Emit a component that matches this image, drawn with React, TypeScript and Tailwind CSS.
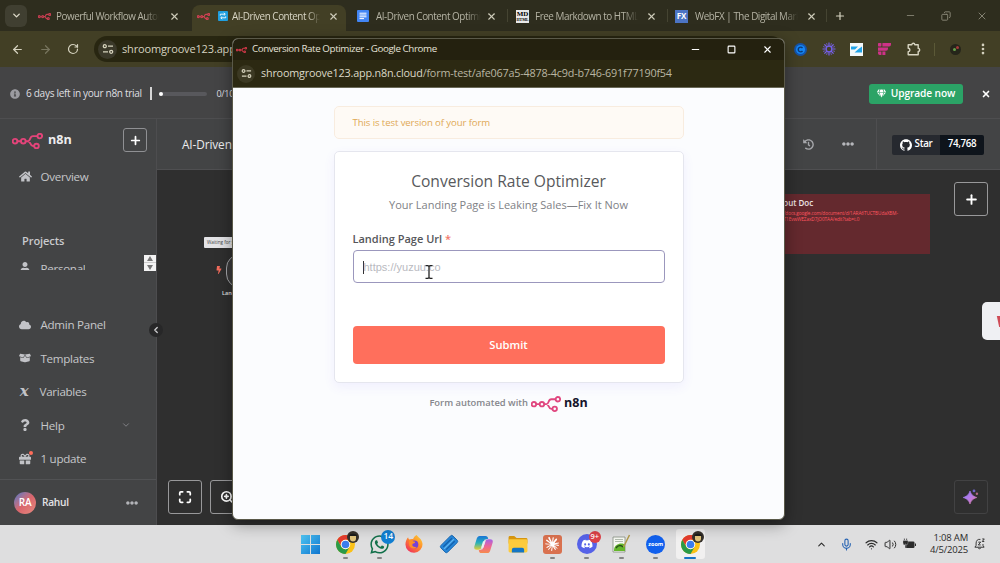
import type { ReactNode } from 'react';
import { FaBolt, FaBoxOpen, FaCloud, FaEllipsisH, FaGem, FaGift, FaHistory, FaHome, FaInfoCircle, FaQuestion, FaUser, FaWhatsapp, FaDiscord } from 'react-icons/fa';
import { SiGithub, SiClaude } from 'react-icons/si';
import { ArrowLeft, ArrowRight, ChevronDown, ChevronLeft, ChevronUp, EllipsisVertical, Maximize, Mic, Minus, Plus, RotateCw, Square, Volume2, Wifi, X, ZoomIn, Copy } from 'lucide-react';

function N8nMark({ className, color = '#d9416d', stroke = 1.9 }: { className: string; color?: string; stroke?: number }) {
  return (
    <svg viewBox="0 0 31 16" className={className} fill="none" stroke={color} strokeWidth={stroke}>
      <circle cx="3" cy="8.2" r="2.3" />
      <circle cx="11.3" cy="8.2" r="2.3" />
      <circle cx="27.8" cy="3.1" r="2.3" />
      <circle cx="24.5" cy="13" r="2.3" />
      <path d="M5.3 8.2H9M13.6 8.2H16C18.8 8.2 17.3 3.1 21 3.1h4.5M16 8.2c2.8 0 1.8 4.8 5 4.8h1.2" />
    </svg>
  );
}

function Tune({ className }: { className: string }) {
  return (
    <svg viewBox="0 0 12 12" className={className} fill="none" stroke="#d6d3bd" strokeWidth="1.3">
      <circle cx="2.8" cy="3.2" r="1.5" />
      <circle cx="9.2" cy="8.8" r="1.5" />
      <path d="M6 3.2h5M1 8.8h5" />
    </svg>
  );
}

function Tab({ width, active, icon, title, textWidth }: { width: string; active?: boolean; icon: ReactNode; title: string; textWidth: string }) {
  return (
    <div className={`${width} flex h-[26px] shrink-0 items-center self-end pb-[4px] ${active ? 'rounded-t-lg bg-[#423f25]' : ''}`}>
      {icon}
      <span className={`${textWidth} shrink-0 overflow-hidden whitespace-nowrap text-[9.9px] tracking-[-0.46px] [mask-image:linear-gradient(to_right,black_86%,transparent)] ${active ? 'text-[#d8d5c4]' : 'text-[#b5b3a4]'}`}>
        {title}
      </span>
      <X className="ml-auto mr-[7px] size-[11px] text-[#cfccba]" strokeWidth={2.4} />
    </div>
  );
}

function TabStrip() {
  return (
    <div className="flex h-[31px] items-center bg-[#2e2d1e]">
      <div className="ml-[5px] flex size-[22px] items-center justify-center rounded-md bg-[#403f31]">
        <ChevronDown className="size-[11px] text-[#dddac9]" strokeWidth={3} />
      </div>
      <Tab width="w-[154px] ml-[6px] pl-[5px]" textWidth="w-[103px]" title="Powerful Workflow Automation" icon={<N8nMark className="mr-[5px] h-[7px] w-[13px] shrink-0" color="#c53d50" stroke={2.8} />} />
      <Tab
        width="w-[154px] ml-[5px] pl-[5px]"
        textWidth="w-[88px]"
        title="AI-Driven Content Optimizer"
        active
        icon={
          <>
            <N8nMark className="mr-[8px] h-[7px] w-[13px] shrink-0" color="#cf4053" stroke={2.8} />
            <svg viewBox="0 0 10 10" className="mr-[4px] size-[10px] shrink-0">
              <rect width="10" height="10" rx="1" fill="#1f9fe0" />
              <path d="M2.3 4.6V3.2h4.5M5.8 1.8l1.5 1.4-1.5 1.3M7.7 5.4v1.4H3.2M4.2 5.5 2.7 6.8l1.5 1.4" stroke="#fff" strokeWidth=".9" fill="none" />
            </svg>
          </>
        }
      />
      <Tab
        width="w-[158px] pl-[11px]"
        textWidth="w-[105px]"
        title="AI-Driven Content Optimizer"
        icon={
          <svg viewBox="0 0 12 12" className="mr-[7px] size-[12px] shrink-0">
            <rect width="12" height="12" rx="1" fill="#4285f4" />
            <path d="M2.5 3.2h7M2.5 5h7M2.5 6.8h7M2.5 8.6h4.5" stroke="#fff" strokeWidth="1" />
          </svg>
        }
      />
      <div className="ml-[3px] h-[13px] w-px bg-[#454432]" />
      <Tab
        width="w-[156px] pl-[8px]"
        textWidth="w-[103px]"
        title="Free Markdown to HTML Converter"
        icon={
          <span className="mr-[6px] flex size-[13px] shrink-0 flex-col items-center justify-center overflow-hidden bg-[#e9e9e9] font-['Liberation_Serif',serif] font-bold text-black">
            <span className="text-[7px] leading-[7px]">MD</span>
            <span className="text-[4px] leading-[4px]">HTML</span>
          </span>
        }
      />
      <div className="ml-[3px] h-[13px] w-px bg-[#454432]" />
      <Tab
        width="w-[156px] pl-[7px]"
        textWidth="w-[103px]"
        title="WebFX | The Digital Marketing"
        icon={<span className="mr-[7px] flex size-[13px] shrink-0 items-center justify-center bg-[#4c74c4] text-[8px] font-bold text-white">FX</span>}
      />
      <div className="ml-[2px] h-[13px] w-px bg-[#454432]" />
      <Plus className="ml-[7px] size-[12px] text-[#d6d3c0]" strokeWidth={2.4} />
      <div className="ml-auto mr-[12px] flex items-center gap-[25px] text-[#8d8b7b]">
        <Minus className="size-[11px]" strokeWidth={1.8} />
        <Copy className="size-[10px] -scale-x-100" strokeWidth={2.2} />
        <X className="size-[12px]" strokeWidth={1.8} />
      </div>
    </div>
  );
}

function Toolbar() {
  return (
    <div className="flex h-[36px] items-center bg-[#423f25] text-[#d6d3c0]">
      <ArrowLeft className="ml-[11px] size-[13px]" strokeWidth={2.2} />
      <ArrowRight className="ml-[15px] size-[13px] text-[#77755e]" strokeWidth={2.2} />
      <RotateCw className="ml-[15px] size-[12px]" strokeWidth={2.4} />
      <div className="ml-[15px] flex h-[26px] w-[690px] items-center rounded-full bg-[#282611] pl-[4px]">
        <span className="flex size-[19px] items-center justify-center rounded-full bg-[#3b392a]">
          <Tune className="size-[12px]" />
        </span>
        <span className="ml-[5px] text-[11px] tracking-[-0.15px]">shroomgroove123.app.n8n.cloud</span>
      </div>
      <div className="ml-[10px] flex items-center">
        <svg viewBox="0 0 13 13" className="size-[13px]">
          <circle cx="6.5" cy="6.5" r="6.5" fill="#1553a8" />
          <circle cx="6.5" cy="6.5" r="4.6" fill="#1386f4" />
          <path d="M8.5 5a2.4 2.4 0 1 0 0 3" stroke="#0c3976" strokeWidth="1.4" fill="none" />
        </svg>
        <svg viewBox="0 0 14 14" className="ml-[15px] size-[14px]" stroke="#7560ea" strokeWidth="1.2" fill="none">
          <circle cx="7" cy="7" r="2.8" />
          <path d="M7 .5v3.700M7 9.800v3.700M.5 7h3.700M9.800 7h3.700M2.400 2.400l2.600 2.600M9 9l2.600 2.600M11.600 2.400 9 5M5 9l-2.600 2.600" />
          <path d="m4.500 1 .9 2.600M8.600 10.400l.9 2.600M9.500 1l-.9 2.600M5.400 10.400 4.500 13M1 4.500l2.600.9M10.400 8.600l2.600.9M13 4.500l-2.600.9M3.600 8.600 1 9.500" strokeWidth=".7" />
        </svg>
        <svg viewBox="0 0 13 13" className="ml-[14px] size-[13px]">
          <rect width="13" height="13" fill="#f4f8fa" />
          <path d="M1 3.500h7L5 6.500H1zM12 9.500H4.500L8.500 6l3.500-2.500z" fill="#21a4e8" />
        </svg>
        <svg viewBox="0 0 13 13" className="ml-[15px] size-[13px]" fill="#cf3288">
          <rect width="3.4" height="3.4" rx=".6" />
          <path d="M4.4 0H13v1.5a2 2 0 0 1-2 2H4.4zM0 4.4h10v1.4a2 2 0 0 1-2 2H0zM0 8.6h3.4V12H1.8A1.8 1.8 0 0 1 0 10.2zM4.4 8.6h3V12h-3z" />
        </svg>
        <svg viewBox="0 0 14 14" className="ml-[16px] size-[14px]" fill="none" stroke="#d6d3c0" strokeWidth="1.4" strokeLinejoin="round">
          <path d="M1.200 2.800h3.600a1.500 1.500 0 0 1 3 0h3.400v3.600a1.500 1.500 0 0 1 0 3v3.400h-10V9.600a1.700 1.700 0 0 0 0-3.400z" />
        </svg>
        <div className="ml-[13px] h-[13px] w-px bg-[#5b5937]" />
        <span className="ml-[15px] flex size-[11px] items-center justify-center rounded-full bg-[#25251a]">
          <span className="size-[3px] rounded-full bg-[#67a04a]" />
          <span className="mb-[3px] size-[3px] rounded-full bg-[#a33a3a]" />
        </span>
        <EllipsisVertical className="ml-[15px] size-[14px]" strokeWidth={2.6} />
      </div>
    </div>
  );
}

function TrialBanner() {
  return (
    <div className="flex h-[52px] items-center border-b border-[#4e4e50] bg-[#444445] pt-[2px] text-[11px] font-medium text-[#dfdfe0]">
      <FaInfoCircle className="ml-[10px] size-[10px] shrink-0 text-[#9b9ba0]" />
      <span className="ml-[6px] w-[119px] shrink-0 whitespace-nowrap text-[10.1px] tracking-[-0.32px]">6 days left in your n8n trial</span>
      <span className="ml-[5px] h-[13px] w-[1.5px] bg-[#d5d5d5]" />
      <span className="ml-[7px] flex h-[4px] w-[48px] items-center rounded-full bg-[#58585c]">
        <span className="size-[4px] rounded-full bg-white" />
      </span>
      <span className="ml-[10px] text-[9px] tracking-[-0.3px]">0/1000</span>
      <button className="ml-auto flex h-[20px] w-[94px] items-center justify-center gap-[5px] rounded-[3px] bg-[#2ba366] text-[10.2px] font-semibold tracking-[-0.1px] text-white">
        <FaGem className="size-[9px]" />
        Upgrade now
      </button>
      <X className="ml-[18px] mr-[9px] size-[10px] text-white" strokeWidth={4} />
    </div>
  );
}

function MenuItem({ icon, label, children }: { icon: ReactNode; label: string; children?: ReactNode }) {
  return (
    <div className="flex h-[33.5px] items-center pl-[18px] text-[11.6px] tracking-[-0.28px] text-[#c6c7ca]">
      <span className="flex w-[14px] justify-center text-[#c2c3c7]">{icon}</span>
      <span className="ml-[8.5px] whitespace-nowrap">{label}</span>
      {children}
    </div>
  );
}

function Sidebar() {
  return (
    <aside className="relative flex w-[157px] shrink-0 flex-col border-r border-[#4d4d4f] bg-[#434445]">
      <div className="flex h-[41px] items-center pt-[1px]">
        <N8nMark className="ml-[12px] mt-[2px] h-[16px] w-[31px]" color="#e4447a" />
        <span className="ml-[5px] text-[12.6px] font-bold text-[#ececee]">n8n</span>
        <button className="ml-auto mr-[9px] flex size-[24px] items-center justify-center rounded-[3px] border border-[#8f9093] text-white">
          <Plus className="size-[13px]" strokeWidth={3.2} />
        </button>
      </div>
      <MenuItem icon={<FaHome className="size-[13px]" />} label="Overview" />
      <div className="mt-[39px] flex h-[17px] items-center pl-[22px] text-[11.1px] font-semibold tracking-[-0.1px] text-[#c9cacd]">Projects</div>
      <div className="mt-[5px] flex h-[17px] justify-between">
        <div className="h-[15.5px] overflow-hidden">
          <div className="-mt-[2.500px]">
            <MenuItem icon={<FaUser className="size-[10px] -translate-y-[2px]" />} label="Personal" />
          </div>
        </div>
        <div className="flex h-[16px] w-[12px] flex-col items-center justify-between bg-[#f3f3f3] py-[1px]">
          <span className="border-x-[3px] border-b-[5px] border-x-transparent border-b-[#777]" />
          <span className="h-px w-full bg-[#ccc]" />
          <span className="border-x-[3px] border-t-[5px] border-x-transparent border-t-[#777]" />
        </div>
      </div>
      <div className="mt-auto">
        <MenuItem icon={<FaCloud className="size-[12px]" />} label="Admin Panel" />
        <MenuItem icon={<FaBoxOpen className="size-[12px]" />} label="Templates" />
        <div className="-ml-px">
          <MenuItem icon={<span className="font-['DejaVu_Serif',serif] text-[15px] font-bold italic leading-none">x</span>} label="Variables" />
        </div>
        <MenuItem icon={<FaQuestion className="size-[12px]" />} label="Help">
          <ChevronDown className="ml-auto mr-[25px] size-[10px] text-[#8b8c90]" />
        </MenuItem>
        <MenuItem
          icon={
            <span className="relative">
              <FaGift className="size-[12px]" />
              <span className="absolute -right-[2px] -top-[2px] size-[4px] rounded-full bg-[#ff6d5a]" />
            </span>
          }
          label="1 update"
        />
      </div>
      <div className="mt-[3.500px] flex h-[46px] items-center border-t border-[#515254] pl-[14px]">
        <span className="flex size-[22px] items-center justify-center rounded-full bg-linear-to-br from-[#3f73c8] via-[#d9656c] to-[#e58b80] text-[10px] font-semibold tracking-[-0.3px] text-white">RA</span>
        <span className="ml-[6px] text-[10.2px] font-semibold tracking-[-0.3px] text-[#e3e3e5]">Rahul</span>
        <FaEllipsisH className="ml-auto mr-[18px] size-[12px] text-[#b3b4b8]" />
      </div>
      <button className="absolute -right-[7px] top-[204px] z-10 flex size-[14px] items-center justify-center rounded-full bg-[#272728] text-[#d0d0d2]">
        <ChevronLeft className="size-[10px]" strokeWidth={3} />
      </button>
    </aside>
  );
}

function Canvas() {
  return (
    <div className="relative flex-1 overflow-hidden bg-[#2f2f2f]">
      <div className="absolute left-[47px] top-[67px] flex h-[11px] w-[60px] items-center rounded-[1px] bg-[#e4e4e7] pl-[3px] text-[4.6px] whitespace-nowrap text-[#444]">Waiting for you</div>
      <FaBolt className="absolute left-[58px] top-[96px] size-[8px] text-[#f26c5c]" />
      <div className="absolute left-[69px] top-[84px] h-[34px] w-[40px] rounded-l-[14px] rounded-r-[4px] border border-[#a5a6aa] bg-[#3a3a3b]" />
      <div className="absolute left-[65px] top-[119px] text-[5.5px] font-semibold text-[#e6e6e6]">Landing</div>

      <div className="absolute left-[610px] top-[24px] h-[60px] w-[163px] bg-[#64292e] pl-[6px] pt-[3px]">
        <p className="whitespace-nowrap text-[8px] font-semibold leading-[12px] text-[#ece3e3]">About Doc</p>
        <p className="-ml-[3px] mt-[1px] whitespace-nowrap text-[4.700px] leading-[6px] tracking-[-0.08px] text-[#ff5660]">https://docs.google.com/document/d/1ARA6TUCTBUdaXBM-</p>
        <p className="ml-[8px] whitespace-nowrap text-[4.700px] leading-[6px] tracking-[-0.08px] text-[#ff5660]">2T1EvwWEZaxD7jO0TAA/edit?tab=t.0</p>
      </div>

      <button className="absolute left-[797px] top-[12px] flex size-[34px] items-center justify-center rounded-[3px] border border-[#98989a] text-white">
        <Plus className="size-[15px]" strokeWidth={3} />
      </button>
      <button className="absolute left-[11px] top-[310px] flex size-[34px] items-center justify-center rounded-[3px] border border-[#98989a] text-white">
        <Maximize className="size-[14px]" strokeWidth={3} />
      </button>
      <button className="absolute left-[53px] top-[310px] flex size-[34px] items-center justify-center rounded-[3px] border border-[#98989a] text-white">
        <ZoomIn className="size-[14px]" strokeWidth={2.8} />
      </button>
      <button className="absolute left-[797px] top-[310px] flex size-[34px] items-center justify-center rounded-[3px] border border-[#424243]">
        <svg viewBox="0 0 16 16" className="size-[16px]">
          <defs>
            <linearGradient id="spark" x1="0" y1="0" x2="1" y2="1">
              <stop offset="0" stopColor="#8b76f2" />
              <stop offset=".5" stopColor="#b67be8" />
              <stop offset="1" stopColor="#e37b8e" />
            </linearGradient>
          </defs>
          <path d="M7 2c1.300 3.500 2.500 5 6.800 6.500C9.500 10 8.300 11.500 7 15c-1.300-3.500-2.500-5-6.800-6.500C4.500 7 5.700 5.500 7 2z" fill="url(#spark)" stroke="url(#spark)" strokeWidth=".7" strokeLinejoin="round" />
          <circle cx="11" cy="1.900" r="1.400" fill="#6f63c8" />
          <circle cx="13.900" cy="4.800" r="1.200" fill="#b26a86" />
        </svg>
      </button>
      <div className="absolute left-[825px] top-[132px] flex h-[38px] w-[24px] items-center rounded-l-[5px] bg-[#eff0f3] pl-[16px]">
        <span className="h-[11px] w-[6px] skew-x-12 bg-[#cf4c57]" />
      </div>
    </div>
  );
}

function Workflow() {
  return (
    <main className="flex flex-1 flex-col">
      <header className="flex h-[51px] shrink-0 items-center border-b border-[#4f4f51] bg-[#434445]">
        <span className="ml-[25px] pt-[1px] text-[11.8px] tracking-[-0.1px] text-[#ececee]">AI-Driven Content Optimizer</span>
        <FaHistory className="ml-auto size-[11px] text-[#a6a7ab]" />
        <FaEllipsisH className="ml-[28px] size-[12px] text-[#b6b7bb]" />
        <div className="ml-[22px] h-full w-px bg-[#4e4e50]" />
        <div className="ml-[15px] mr-[16px] mt-[1px] flex h-[20px] w-[92px] shrink-0 overflow-hidden rounded-[2px] text-[9.8px] font-semibold tracking-[-0.35px] text-white">
          <span className="flex w-[48px] items-center justify-center gap-[3px] bg-[#26292f]">
            <SiGithub className="size-[12px]" />
            Star
          </span>
          <span className="flex flex-1 items-center justify-center bg-[#0e141b]">74,768</span>
        </div>
      </header>
      <Canvas />
    </main>
  );
}

function FormWindow() {
  return (
    <section className="absolute left-[232px] top-[38px] flex h-[482px] w-[553px] flex-col overflow-hidden rounded-[6px] border border-[#5a5949] bg-[#fbfcfe] shadow-[0_4px_16px_rgba(0,0,0,0.4)]">
      <div className="flex h-[21px] shrink-0 items-center bg-[#24210f] text-white">
        <N8nMark className="ml-[3px] h-[6px] w-[11px]" color="#c93746" stroke={3} />
        <span className="ml-[5px] whitespace-nowrap text-[9.8px] tracking-[-0.42px] text-[#e4e2d8]">Conversion Rate Optimizer - Google Chrome</span>
        <div className="ml-auto mr-[11px] flex items-center gap-[26px]">
          <Minus className="size-[11px]" strokeWidth={2.6} />
          <Square className="size-[9px]" strokeWidth={3} />
          <X className="size-[11px]" strokeWidth={2.4} />
        </div>
      </div>
      <div className="flex h-[28px] shrink-0 items-center border-b border-[#6a6958] bg-[#2c2912]">
        <span className="ml-[4px] flex size-[18px] items-center justify-center rounded-full bg-[#3c3923]">
          <Tune className="size-[11px]" />
        </span>
        <span className="ml-[6px] whitespace-nowrap text-[10.8px] tracking-[-0.19px] text-[#dcd9c8]">
          shroomgroove123.app.n8n.cloud<span className="text-[#b9b6a2]">/form-test/afe067a5-4878-4c9d-b746-691f77190f54</span>
        </span>
      </div>

      <div className="mx-auto flex w-[350px] flex-col pt-[18px]">
        <div className="flex h-[33px] items-center rounded-[5px] border border-[#f8ecdf] bg-[#fefaf5] pl-[18px] pt-[2px] text-[9.6px] tracking-[-0.1px] text-[#e0a956]">
          This is test version of your form
        </div>
        <div className="mt-[12px] flex h-[232px] flex-col rounded-[5px] border border-[#e5e6ee] bg-white px-[18px] shadow-[0_4px_12px_rgba(99,77,255,0.07)]">
          <h1 className="mt-[18px] text-center text-[15.6px] leading-[22px] text-[#58595c]">Conversion Rate Optimizer</h1>
          <p className="mt-[4px] text-center text-[11px] leading-[18px] text-[#808186]">Your Landing Page is Leaking Sales—Fix It Now</p>
          <label className="mt-[17px] text-[11px] font-semibold leading-[16px] text-[#55565a]">
            Landing Page Url <span className="text-[#f27a6c]">*</span>
          </label>
          <div className="mt-[3px] flex h-[33px] shrink-0 items-center rounded-[4px] border border-[#9b97bd] pl-[9px] pt-[1px]">
            <span className="h-[13px] w-px bg-[#333]" />
            <span className="font-['Liberation_Sans',sans-serif] text-[11px] text-[#b9babf]">https://yuzuu.co</span>
          </div>
          <button className="mt-[43px] h-[38px] shrink-0 rounded-[4px] bg-[#ff6f5c] pt-[1px] text-[11.2px] font-semibold text-white">Submit</button>
        </div>
        <div className="mt-[11px] flex h-[19px] items-center justify-center text-[9.400px] font-semibold text-[#85868c]">
          Form automated with
          <N8nMark className="ml-[3px] h-[16px] w-[30px]" color="#e0467f" />
          <span className="ml-[3px] text-[12.5px] font-bold text-[#15152b]">n8n</span>
        </div>
      </div>

      <svg viewBox="0 0 8 14" className="absolute left-[191.5px] top-[226px] h-[14px] w-[8px]" stroke="#222" strokeWidth="1.3" fill="none">
        <path d="M.5.700H3L4 1.500 5 .700h2.500M4 1.500v11M.5 13.300H3l1-.8 1 .8h2.500" />
      </svg>
    </section>
  );
}

function ChromeLogo() {
  return (
    <svg viewBox="0 0 20 20" className="size-[19px]">
      <circle cx="10" cy="10" r="10" fill="#fbc116" />
      <path d="M1.340 5A10 10 0 0 1 18.660 5H10a5 5 0 0 0-4.330 7.500z" fill="#e33b2e" />
      <path d="M1.340 5A10 10 0 0 0 10 20l4.330-7.500a5 5 0 0 1-8.660 0z" fill="#2a9a48" />
      <circle cx="10" cy="10" r="5" fill="#fff" />
      <circle cx="10" cy="10" r="4" fill="#3b7ded" />
    </svg>
  );
}

function ProfileBadge() {
  return (
    <svg viewBox="0 0 12 12" className="absolute -right-[4px] -top-[4px] size-[12px]">
      <circle cx="6" cy="6" r="6" fill="#35302a" />
      <path d="M3 5h6v2.500a3 3 0 0 1-6 0z" fill="#dfc37b" />
      <path d="M2 5c0-3 8-3 8 0z" fill="#1b1b1b" />
    </svg>
  );
}

function TaskIcon({ children, mark, active }: { children: ReactNode; mark?: boolean; active?: boolean }) {
  return (
    <div className={`relative flex h-[38px] w-[34.5px] items-center justify-center ${active ? 'before:absolute before:inset-x-[3px] before:inset-y-[4px] before:rounded-[3px] before:bg-[#f1f0f0]' : ''}`}>
      <div className="relative">{children}</div>
      {mark && <span className={`absolute bottom-[4px] h-[2px] rounded-full ${active ? 'w-[12px] bg-[#1673c5]' : 'w-[5px] bg-[#858585]'}`} />}
    </div>
  );
}

function Taskbar() {
  return (
    <footer className="flex h-[38px] shrink-0 items-center bg-[#dededf] text-[#2b2b2b]">
      <div className="ml-[293.500px] flex">
        <TaskIcon>
          <svg viewBox="0 0 19 19" className="size-[19px]">
            <path d="M0 0h9v9H0zM10 0h9v9h-9zM0 10h9v9H0zM10 10h9v9h-9z" fill="url(#win)" />
            <linearGradient id="win" x1="0" y1="0" x2="1" y2="1">
              <stop stopColor="#4fc5f2" />
              <stop offset="1" stopColor="#0f75cf" />
            </linearGradient>
          </svg>
        </TaskIcon>
        <TaskIcon mark>
          <ChromeLogo />
          <ProfileBadge />
        </TaskIcon>
        <TaskIcon mark>
          <FaWhatsapp className="size-[21px] text-[#12704a]" />
          <span className="absolute -right-[5px] -top-[4px] flex size-[14px] items-center justify-center rounded-full bg-[#117fd2] text-[8.5px] font-semibold text-white">14</span>
        </TaskIcon>
        <TaskIcon>
          <svg viewBox="0 0 20 20" className="size-[18px]">
            <linearGradient id="fox" x1="1" y1="0" x2=".2" y2="1">
              <stop stopColor="#ffd93b" />
              <stop offset=".5" stopColor="#ff8a2a" />
              <stop offset="1" stopColor="#ef2e60" />
            </linearGradient>
            <path d="M13 0c1 2.500 6 4 6.500 10a9.500 9.500 0 0 1-19 .5C.5 7 2 4 3.500 2.500c0 1 .5 2 1.200 2.500C6 4.500 8 4.200 9 4.500 9.500 3 11 1 13 0z" fill="url(#fox)" />
            <circle cx="10.500" cy="10.500" r="4.300" fill="#7542d6" />
            <path d="M4.500 6c2-1 4 0 5 1.300 1.500 0 2 .7 1.500 1.200-1 .8-2.500.6-2.800 2-.5 2 2 3.500 5 2.500-2 3-7.500 2.500-8.500-1.500z" fill="#ff8f26" />
          </svg>
        </TaskIcon>
        <TaskIcon>
          <svg viewBox="0 0 20 20" className="size-[20px]">
            <g transform="rotate(-45 10 10)">
              <rect x="1.500" y="5.300" width="17" height="9.500" rx="1.800" fill="#2585d8" stroke="#1260a8" strokeWidth=".8" />
              <path d="M4 8h12M4 12h12" stroke="#1561aa" strokeWidth="1.300" />
              <path d="M3 10h14" stroke="#62b8f2" strokeWidth="1.200" />
            </g>
          </svg>
        </TaskIcon>
        <TaskIcon>
          <svg viewBox="0 0 20 20" className="size-[19px]">
            <linearGradient id="copA" x1="0" y1="0" x2="0" y2="1">
              <stop stopColor="#1976dc" />
              <stop offset=".5" stopColor="#28b1b9" />
              <stop offset="1" stopColor="#e5cf35" />
            </linearGradient>
            <linearGradient id="copB" x1="0" y1="0" x2="0" y2="1">
              <stop stopColor="#a463e8" />
              <stop offset=".5" stopColor="#ed6596" />
              <stop offset="1" stopColor="#f68b4c" />
            </linearGradient>
            <path d="M6 1h6c2 0 2.500 1 3 3l-4 1-3 8c-.5 1.800-1.500 2.500-3.500 2.500H3C.5 15.500-.3 14 .5 11.500L3 3.500C3.500 2 4.500 1 6 1z" fill="url(#copA)" />
            <path d="M14 19H8c-2 0-2.500-1-3-3l4-1 3-8c.5-1.800 1.500-2.500 3.500-2.500H17c2.500 0 3.300 1.500 2.500 4L17 16.500c-.5 1.500-1.500 2.500-3 2.500z" fill="url(#copB)" />
            <path d="M9.500 6.500h2.300L10 13.500H7.500z" fill="#e9eef5" />
          </svg>
        </TaskIcon>
        <TaskIcon>
          <svg viewBox="0 0 20 18" className="h-[17px] w-[20px]">
            <path d="M0 1.500A1.500 1.500 0 0 1 1.500 0H6l2.500 2H18.500A1.500 1.500 0 0 1 20 3.500V8H0z" fill="#d9970f" />
            <rect y="3.500" width="20" height="14" rx="1.500" fill="#fdcb3c" />
            <path d="M3.500 17.500v-3A2 2 0 0 1 5.500 12.500h9a2 2 0 0 1 2 2v3z" fill="#1475c4" />
          </svg>
        </TaskIcon>
        <TaskIcon mark>
          <span className="flex size-[19px] items-center justify-center rounded-[3px] bg-[#d9714f]">
            <SiClaude className="size-[14px] text-white" />
          </span>
        </TaskIcon>
        <TaskIcon mark>
          <span className="flex size-[20px] items-center justify-center rounded-full bg-[#5662e8]">
            <FaDiscord className="size-[12px] text-white" />
          </span>
          <span className="absolute -right-[4px] -top-[3px] flex size-[12px] items-center justify-center rounded-full bg-[#dc4148] text-[7.5px] font-semibold text-white">9+</span>
        </TaskIcon>
        <TaskIcon mark>
          <svg viewBox="0 0 20 20" className="size-[20px]">
            <path d="M2 3h12v15H2z" fill="#f6f8f2" stroke="#858d80" strokeWidth=".8" />
            <path d="M4 5.500h8M4 7.500h8" stroke="#9eaa9a" strokeWidth=".8" />
            <path d="M3 16c0-6 8-8 11-5v6H3z" fill="#65b72b" />
            <path d="M5 14c2-3 5-3 7-1" stroke="#244f17" strokeWidth="1.500" fill="none" />
            <path d="m18.500 1-6 12" stroke="#b19a49" strokeWidth="1.500" />
          </svg>
        </TaskIcon>
        <TaskIcon mark>
          <span className="flex size-[19px] items-center justify-center rounded-full bg-[#1160ed] text-[5.5px] font-bold text-white">zoom</span>
        </TaskIcon>
        <TaskIcon mark active>
          <ChromeLogo />
          <ProfileBadge />
        </TaskIcon>
      </div>
      <ChevronUp className="ml-auto size-[11px]" strokeWidth={2.4} />
      <Mic className="ml-[13px] size-[13px] text-[#2562b2]" />
      <Wifi className="ml-[12px] size-[13px]" strokeWidth={2.2} />
      <Volume2 className="ml-[6px] size-[13px]" strokeWidth={1.8} />
      <svg viewBox="0 0 13 12" className="ml-[6px] h-[12px] w-[13px]" fill="#2b2b2b">
        <rect x="2" y="3.500" width="9.500" height="6.500" rx="1.300" />
        <rect x="12" y="5.500" width="1" height="2.500" />
        <path d="M0 2.500h5v2.200a2.500 2.500 0 0 1-5 0zM.9.500h1v2h-1zM3.100.500h1v2h-1zM2 6h1v4H2z" stroke="#dededf" strokeWidth=".3" />
      </svg>
      <div className="ml-[6px] w-[46px] whitespace-nowrap text-right text-[9.5px] leading-[12.5px] tracking-[-0.2px]">
        <p>1:08 AM</p>
        <p>4/5/2025</p>
      </div>
      <svg viewBox="0 0 12 13" className="ml-[6px] mr-[15px] h-[12px] w-[11px] shrink-0" fill="none" stroke="#2b2b2b">
        <path d="M7 1.500C4 .8 2.300 3 2.300 5.500V8L1 10h10L9.800 8V6.500M4.500 10.500c.3 1.600 2.700 1.600 3 0M4.700 4.500h2.600l-2.600 3h2.600M9 1h2.200L9 3.800h2.200" />
      </svg>
    </footer>
  );
}

export default function App() {
  return (
    <div className="relative flex h-[563px] w-[1000px] flex-col overflow-hidden bg-[#2f2f2f] font-['Open_Sans','Noto_Sans',sans-serif]">
      <TabStrip />
      <Toolbar />
      <TrialBanner />
      <div className="flex h-[406px] shrink-0">
        <Sidebar />
        <Workflow />
      </div>
      <Taskbar />
      <FormWindow />
    </div>
  );
}
